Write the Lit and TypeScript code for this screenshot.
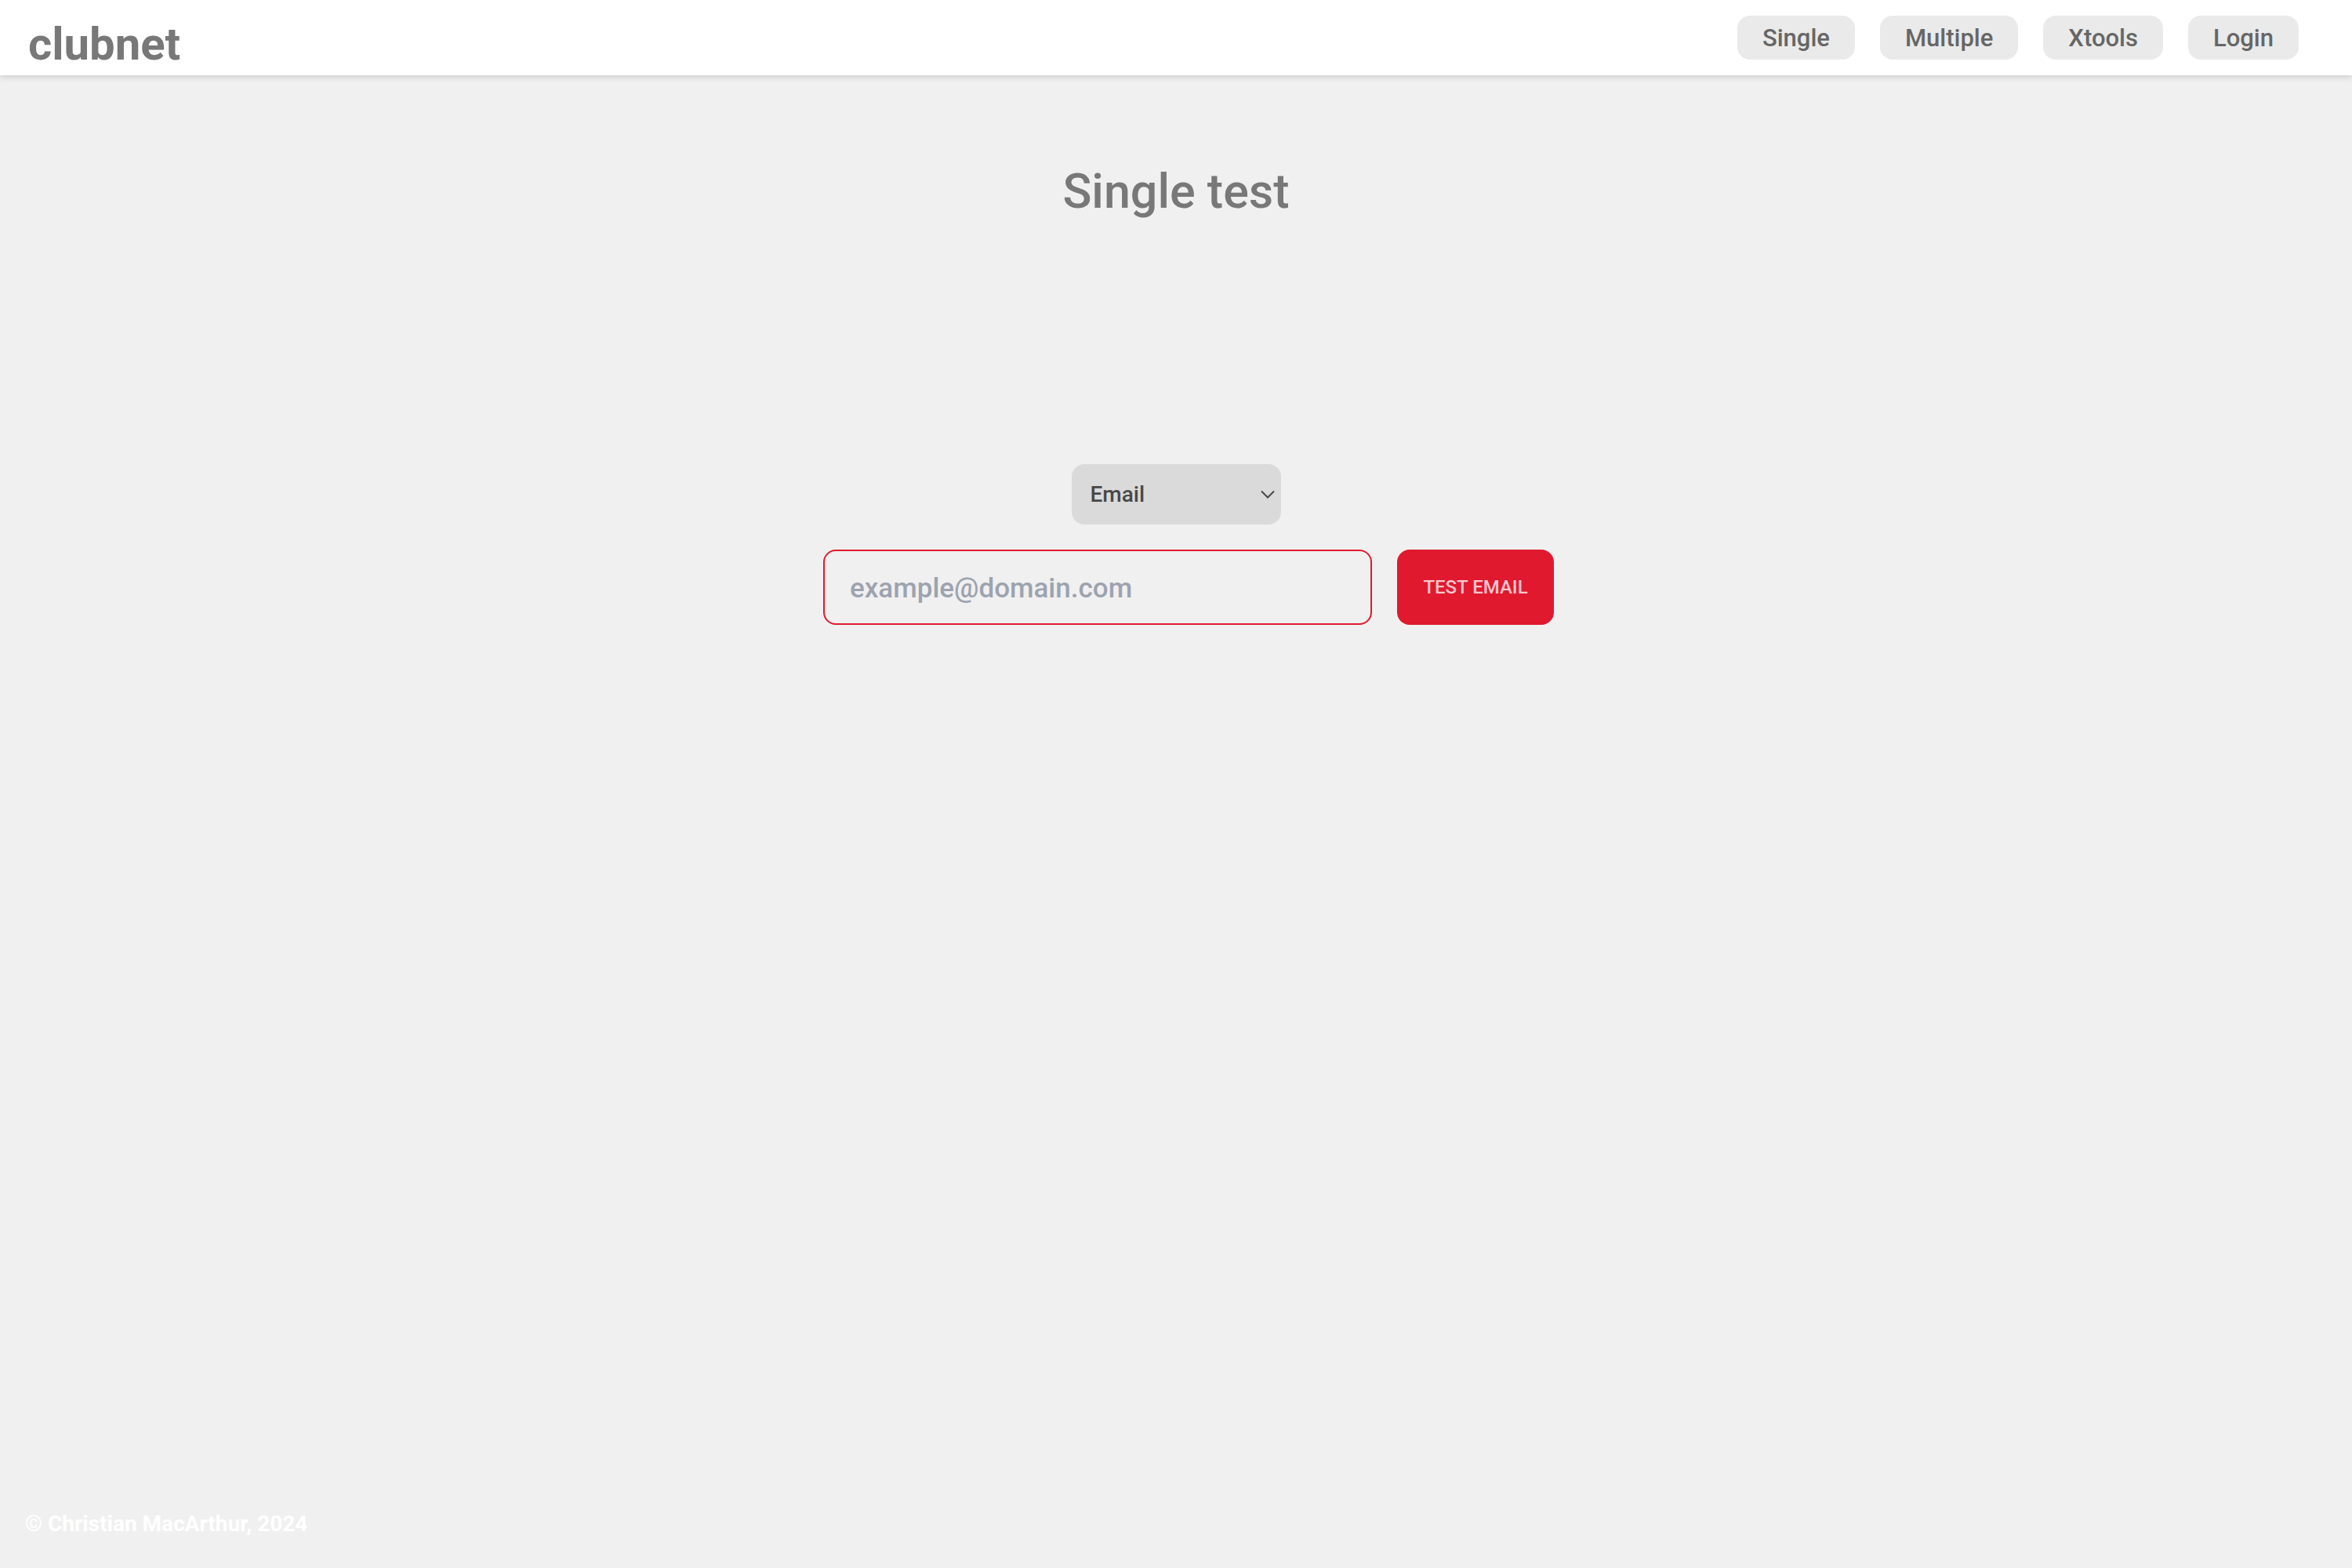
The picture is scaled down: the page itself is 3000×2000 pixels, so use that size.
import { LitElement, html, css } from "lit";
import { customElement, state } from "lit/decorators.js";

interface NavLink {
  label: string;
  href: string;
}

const NAV_LINKS: NavLink[] = [
  { label: "Single", href: "#single" },
  { label: "Multiple", href: "#multiple" },
  { label: "Xtools", href: "#xtools" },
  { label: "Login", href: "#login" },
];

@customElement("site-header")
export class SiteHeader extends LitElement {
  static styles = css`
    :host {
      display: block;
    }
    .bar {
      display: flex;
      align-items: center;
      justify-content: space-between;
      min-height: 96px;
      padding: 0 68px 0 36px;
      box-sizing: border-box;
      background: #ffffff;
      box-shadow: 0 2px 8px rgba(0, 0, 0, 0.16);
    }
    .brand {
      padding-top: 16px;
      color: #787878;
      font-size: 58px;
      font-weight: 700;
      line-height: 80px;
      text-decoration: none;
    }
    .nav {
      display: flex;
      gap: 32px;
    }
    .link {
      padding: 2px 32px 0;
      border-radius: 16px;
      background: #eaeaea;
      color: #666666;
      font-size: 31px;
      font-weight: 500;
      line-height: 54px;
      text-decoration: none;
    }
  `;

  render() {
    return html`
      <header class="bar">
        <a class="brand" href="#home">clubnet</a>
        <nav class="nav">
          ${NAV_LINKS.map(
            (link) => html`<a class="link" href=${link.href}>${link.label}</a>`
          )}
        </nav>
      </header>
    `;
  }
}

@customElement("single-test")
export class SingleTest extends LitElement {
  static styles = css`
    :host {
      display: block;
    }
    .title {
      margin: 0;
      color: #787878;
      font-size: 61px;
      font-weight: 500;
      line-height: 96px;
      text-align: center;
    }
    .form {
      display: flex;
      flex-direction: column;
      align-items: center;
      gap: 32px;
      margin-top: 300px;
    }
    .picker {
      display: grid;
      grid-template-columns: 267px;
      align-items: center;
    }
    .kind {
      grid-area: 1 / 1;
      height: 77px;
      padding: 0 32px 0 24px;
      border: 0;
      border-radius: 16px;
      background: #dadada;
      color: #484848;
      font: inherit;
      font-size: 28px;
      font-weight: 500;
      appearance: none;
    }
    .chevron {
      grid-area: 1 / 1;
      justify-self: end;
      width: 20px;
      height: 12px;
      margin-right: 7px;
      fill: none;
      stroke: #484848;
      stroke-width: 2;
      pointer-events: none;
    }
    .row {
      display: flex;
      flex-wrap: wrap;
      justify-content: center;
      gap: 32px;
      padding-left: 32px;
    }
    .address {
      width: 700px;
      max-width: 100%;
      height: 96px;
      padding: 2px 32px 0;
      box-sizing: border-box;
      border: 2px solid #e0192f;
      border-radius: 16px;
      background: transparent;
      color: #484848;
      font: inherit;
      font-size: 35px;
      font-weight: 500;
    }
    .address::placeholder {
      color: #9ca3af;
      opacity: 1;
    }
    .submit {
      width: 200px;
      height: 96px;
      padding: 0;
      border: 0;
      border-radius: 16px;
      background: #e0192f;
      color: #ffc5cc;
      font: inherit;
      font-size: 24px;
      font-weight: 500;
      text-transform: uppercase;
    }
  `;

  @state() private kind = "Email";

  private onKindChange(event: Event) {
    this.kind = (event.target as HTMLSelectElement).value;
  }

  private onSubmit(event: Event) {
    event.preventDefault();
  }

  render() {
    return html`
      <h1 class="title">Single test</h1>
      <form class="form" @submit=${this.onSubmit}>
        <div class="picker">
          <select class="kind" aria-label="Test type" @change=${this.onKindChange}>
            <option>Email</option>
          </select>
          <svg class="chevron" viewBox="0 0 20 12" aria-hidden="true">
            <path d="M2 1.5 L10 9.5 L18 1.5" />
          </svg>
        </div>
        <div class="row">
          <input
            class="address"
            type="email"
            aria-label="Email address"
            placeholder="example@domain.com"
          />
          <button class="submit" type="submit">Test ${this.kind}</button>
        </div>
      </form>
    `;
  }
}

@customElement("app-root")
export class AppRoot extends LitElement {
  static styles = css`
    :host {
      display: flex;
      flex-direction: column;
      min-height: 100vh;
      background: #f0f0f0;
      font-family: Roboto, "Open Sans", sans-serif;
    }
    .main {
      flex: 1;
      padding: 100px 32px 32px;
    }
    .footer {
      padding: 32px;
      color: #ffffff;
      font-size: 28px;
      font-weight: 700;
      line-height: 48px;
    }
  `;

  render() {
    return html`
      <site-header></site-header>
      <main class="main"><single-test></single-test></main>
      <footer class="footer">© Christian MacArthur, 2024</footer>
    `;
  }
}
